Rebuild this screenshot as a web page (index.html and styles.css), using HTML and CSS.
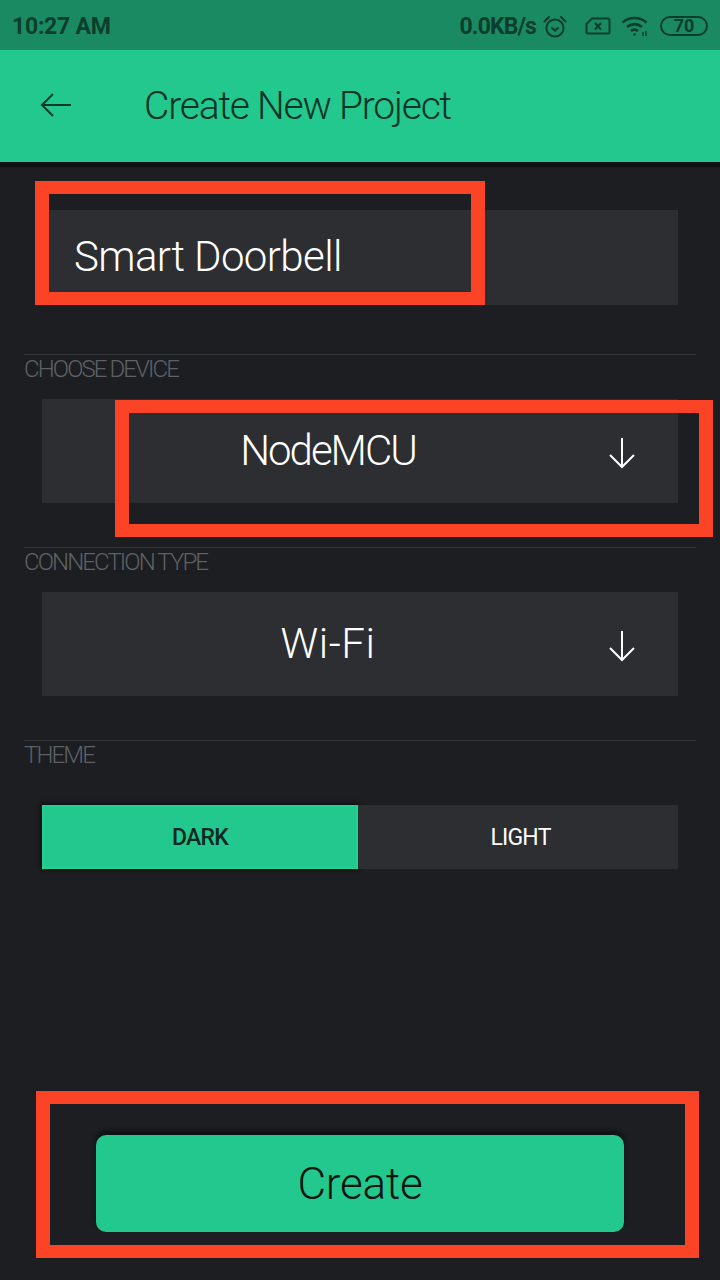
FILE: index.html
```html
<!DOCTYPE html>
<html lang="en">
<head>
  <meta charset="UTF-8" />
  <title>Create New Project</title>
  <link rel="stylesheet" href="styles.css">
</head>
<body>
  <div class="screen">
    <div class="statusbar">
      <span class="time">10:27 AM</span>
      <div class="status-right">
        <span class="speed">0.0KB/s</span>
        <svg class="ico-clock" width="24" height="23" viewBox="0 0 24 23" fill="none" stroke="#0d3d2c" stroke-width="2">
          <circle cx="12" cy="13" r="8.6"/>
          <path d="M8.4 12.6l3.6 3 3.6-3"/>
          <path d="M1.5 6.5L6 2M22.500 6.5L18 2" stroke-linecap="round"/>
        </svg>
        <svg class="ico-sim" width="26" height="18" viewBox="0 0 26 18" fill="none" stroke="#0d3d2c" stroke-width="2">
          <path d="M7 1.500H23a1.500 1.500 0 0 1 1.500 1.500V15a1.500 1.500 0 0 1-1.500 1.500H3A1.500 1.500 0 0 1 1.500 15V7z"/>
          <path d="M10 6l6 6.500M16 6l-6 6.500"/>
        </svg>
        <svg class="ico-wifi" width="29" height="21" viewBox="0 0 29 21" fill="none" stroke="#0d3d2c" stroke-width="2.600">
          <path d="M1.500 6.500c7-6 17-6 24 0"/>
          <path d="M6 11c4.500-3.800 10.500-3.800 15 0"/>
          <path d="M10 15c2-1.500 5-1.500 7 0"/>
          <circle cx="13.500" cy="18.500" r="1.300" fill="#0d3d2c" stroke="none"/>
          <path d="M22 16v4M25 15v5" stroke-width="1.400"/>
        </svg>
        <span class="battery">70</span>
      </div>
    </div>

    <div class="header">
      <svg class="back" width="32" height="26" viewBox="0 0 32 26" fill="none" stroke="#0f3a2b" stroke-width="2">
        <path d="M31 13H2M13 2L2 13l11 11"/>
      </svg>
      <span class="title">Create New Project</span>
    </div>

    <div class="form">
      <div class="field name-field">Smart Doorbell</div>

      <div class="section device">
        <div class="section-label">CHOOSE DEVICE</div>
        <div class="field select">
          <span class="select-text">NodeMCU</span>
          <svg class="arrow" width="28" height="32" viewBox="0 0 28 32" fill="none" stroke="#fff" stroke-width="2">
            <path d="M14 1v29M2 18l12 12 12-12"/>
          </svg>
        </div>
      </div>

      <div class="section connection">
        <div class="section-label">CONNECTION TYPE</div>
        <div class="field select">
          <span class="select-text wide">Wi-Fi</span>
          <svg class="arrow" width="28" height="32" viewBox="0 0 28 32" fill="none" stroke="#fff" stroke-width="2">
            <path d="M14 1v29M2 18l12 12 12-12"/>
          </svg>
        </div>
      </div>

      <div class="section theme">
        <div class="section-label">THEME</div>
        <div class="segments">
          <div class="segment active">DARK</div>
          <div class="segment">LIGHT</div>
        </div>
      </div>
    </div>

    <div class="footer">
      <button class="create">Create</button>
    </div>

    <!-- red marks drawn over the screenshot -->
    <div class="mark mark-name"></div>
    <div class="mark mark-device"></div>
    <div class="mark mark-create"></div>
  </div>
</body>
</html>
```

FILE: styles.css
```css
* {
  box-sizing: border-box;
}

body {
  margin: 0;
  background: #1c1e21;
  font-family: Roboto, "Liberation Sans", sans-serif;
}

.screen {
  position: relative;
  width: 720px;
  height: 1280px;
  display: flex;
  flex-direction: column;
  overflow: hidden;
}

.statusbar {
  height: 50px;
  flex: none;
  display: flex;
  align-items: center;
  justify-content: space-between;
  padding: 2px 12px 0 12px;
  background: #1a8a63;
  color: #0d3d2c;
  font-size: 23px;
  font-weight: 700;
}

.time {
  letter-spacing: -0.25px;
}

.status-right {
  display: flex;
  align-items: center;
}

.speed {
  letter-spacing: -0.9px;
}

.ico-clock {
  margin-left: 7px;
}

.ico-sim {
  margin-left: 18px;
}

.ico-wifi {
  margin-left: 10px;
}

.battery {
  width: 48px;
  height: 20px;
  margin-left: 10px;
  border: 2px solid #0d3d2c;
  border-radius: 10px;
  font-size: 18px;
  line-height: 16px;
  text-align: center;
}

.header {
  height: 117px;
  flex: none;
  display: flex;
  align-items: center;
  padding: 0 0 1px 40px;
  background: #23c88f;
  border-bottom: 5px solid #0f1114;
  color: #0b3326;
}

.back {
  margin-bottom: 2px;
}

.title {
  margin-left: 72px;
  font-size: 39px;
  font-weight: 300;
  letter-spacing: -1.2px;
}

.form {
  padding: 43px 24px 0 24px;
}

.field {
  background: #2c2e31;
  color: #fff;
  margin: 0 18px;
  font-weight: 300;
}

.name-field {
  height: 95px;
  line-height: 94px;
  padding-left: 32px;
  font-size: 42px;
  letter-spacing: -0.6px;
}

.section {
  border-top: 1px solid #34363a;
}

.device {
  margin-top: 49px;
}

.connection {
  margin-top: 44px;
}

.theme {
  margin-top: 44px;
}

.section-label {
  height: 44px;
  line-height: 28px;
  color: #5e6165;
  font-size: 24px;
  font-weight: 300;
  letter-spacing: -1.9px;
}

.select {
  position: relative;
  height: 104px;
  display: flex;
  align-items: center;
  font-size: 42px;
}

.select-text {
  width: 572px;
  padding-bottom: 2px;
  text-align: center;
  letter-spacing: -2px;
}

.select-text.wide {
  letter-spacing: 0.6px;
}

.arrow {
  margin: 3px 0 0 -6px;
}

.segments {
  display: flex;
  margin: 20px 18px 0 18px;
  height: 64px;
}

.segment {
  flex: 1;
  display: flex;
  align-items: center;
  justify-content: center;
  padding-left: 5px;
  background: #2c2e31;
  color: #fff;
  font-size: 23px;
  font-weight: 400;
  letter-spacing: -0.8px;
}

.segment.active {
  flex: none;
  width: 316px;
  padding-left: 0;
  background: #23c88f;
  border: 2px solid #1ed38d;
  box-shadow: 0 0 4px 1px #0a0c0e;
  color: #0c2a20;
  font-weight: 500;
}

.footer {
  margin-top: auto;
  padding: 0 96px 48px 96px;
}

.create {
  display: block;
  width: 100%;
  height: 97px;
  border: 0;
  border-radius: 10px;
  background: #23c88f;
  box-shadow: 0 -4px 4px #0f1114;
  color: #08150f;
  font-family: Roboto, "Liberation Sans", sans-serif;
  font-size: 44px;
  font-weight: 300;
  letter-spacing: -0.2px;
}

.mark {
  position: absolute;
  border: solid #fb4326;
  border-width: 13px 14px;
}

.mark-name {
  left: 35px;
  top: 181px;
  width: 450px;
  height: 124px;
}

.mark-device {
  left: 115px;
  top: 400px;
  width: 598px;
  height: 137px;
}

.mark-create {
  left: 36px;
  top: 1091px;
  width: 663px;
  height: 167px;
}
```
